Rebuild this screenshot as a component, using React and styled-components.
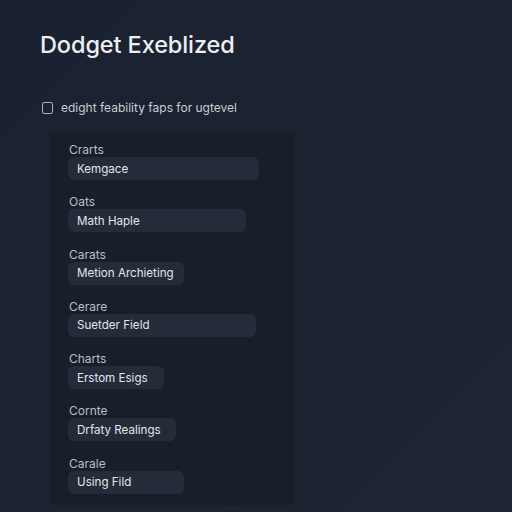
import React from "react";
import styled, { createGlobalStyle } from "styled-components";

const Global = createGlobalStyle`
  html, body { margin: 0; padding: 0; background: #1b2230; }
  body { font-family: Inter, "Noto Sans", "Liberation Sans", sans-serif; }
`;

const Page = styled.div`
  width: 512px;
  height: 512px;
  box-sizing: border-box;
  padding: 30px 0 0 40px;
  background: linear-gradient(135deg, #1a2130 0%, #1c2331 60%, #1d2432 100%);
  display: flex;
  flex-direction: column;
  overflow: hidden;
`;

const Title = styled.h1`
  margin: 0;
  font-size: 23.5px;
  line-height: 30px;
  font-weight: 500;
  color: #eceef2;
  letter-spacing: -0.1px;
`;

const CheckRow = styled.label`
  display: flex;
  align-items: center;
  gap: 8px;
  margin: 39px 0 0 2px;
  font-size: 12px;
  line-height: 18px;
  color: #c9cdd5;
`;

const Box = styled.span`
  width: 9px;
  height: 10px;
  border: 1.3px solid #aab0ba;
  border-radius: 2px;
  flex: none;
`;

const Panel = styled.div`
  margin: 15px 0 0 10px;
  width: 245px;
  height: 373px;
  box-sizing: border-box;
  padding: 11px 0 0 18px;
  background: #181e2a;
  border-radius: 4px;
  display: flex;
  flex-direction: column;
  gap: 15.3px;
`;

const Group = styled.div`
  display: flex;
  flex-direction: column;
  gap: 1px;
`;

const Label = styled.div`
  font-size: 12px;
  line-height: 13px;
  color: #b9bfc9;
  padding-left: 1px;
`;

const Field = styled.div`
  width: ${(p) => p.w}px;
  height: 23px;
  flex: none;
  box-sizing: border-box;
  padding-left: 9px;
  display: flex;
  align-items: center;
  background: #242c39;
  border-radius: 6px;
  font-size: 11.6px;
  color: #e2e5ea;
`;

const items = [
  ["Crarts", "Kemgace", 191],
  ["Oats", "Math Haple", 178],
  ["Carats", "Metion Archieting", 116],
  ["Cerare", "Suetder Field", 188],
  ["Charts", "Erstom Esigs", 96],
  ["Cornte", "Drfaty Realings", 108],
  ["Carale", "Using Fild", 116],
];

export default function App() {
  return (
    <Page>
      <Global />
      <Title>Dodget Exeblized</Title>
      <CheckRow>
        <Box />
        edight feability faps for ugtevel
      </CheckRow>
      <Panel>
        {items.map(([l, v, w]) => (
          <Group key={l + v}>
            <Label>{l}</Label>
            <Field w={w}>{v}</Field>
          </Group>
        ))}
      </Panel>
    </Page>
  );
}
